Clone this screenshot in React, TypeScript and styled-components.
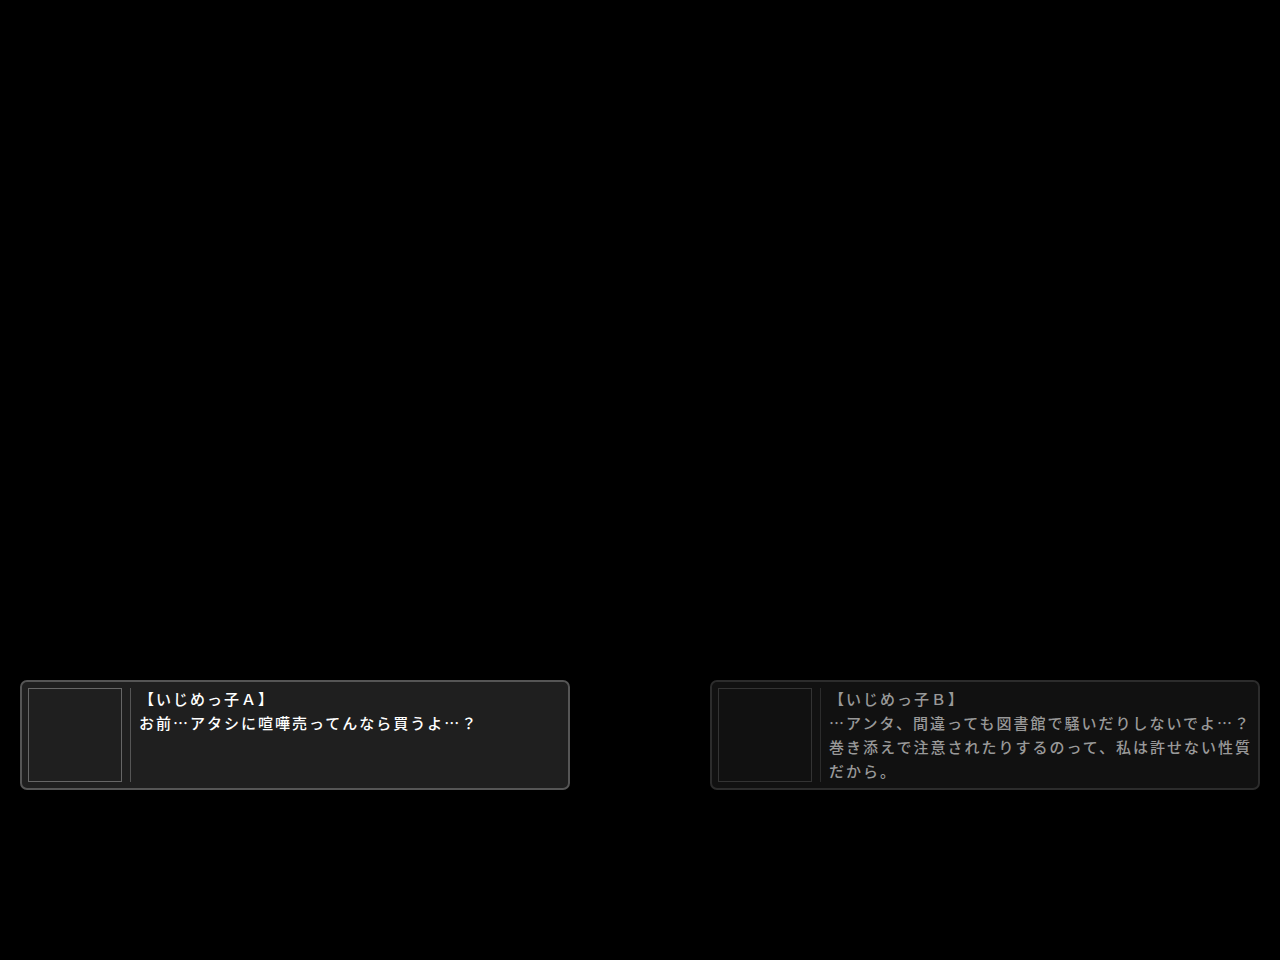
import React from 'react';
import styled, { createGlobalStyle } from 'styled-components';

const GlobalStyle = createGlobalStyle`
  html, body {
    margin: 0;
    padding: 0;
    background: #000;
  }
  body {
    font-family: "Noto Sans CJK JP", "Noto Sans", sans-serif;
  }
`;

const Screen = styled.div`
  width: 1280px;
  height: 960px;
  background: #000;
  display: flex;
  flex-direction: column;
  justify-content: flex-end;
  padding: 0 20px 170px;
  box-sizing: border-box;
`;

const Row = styled.div`
  display: flex;
  justify-content: space-between;
  align-items: flex-start;
`;

const Window = styled.div<{ $active: boolean }>`
  width: 550px;
  height: 110px;
  box-sizing: border-box;
  display: flex;
  gap: 8px;
  padding: 6px;
  border-radius: 7px;
  border: 2px solid ${(p) => (p.$active ? '#555' : '#2c2c2c')};
  background: ${(p) => (p.$active ? '#1f1f1f' : '#111')};
`;

const Portrait = styled.div<{ $active: boolean }>`
  flex: 0 0 94px;
  height: 94px;
  box-sizing: border-box;
  border: 1px solid ${(p) => (p.$active ? '#666' : '#333')};
`;

const Divider = styled.div<{ $active: boolean }>`
  flex: 0 0 1px;
  height: 94px;
  background: ${(p) => (p.$active ? '#555' : '#2c2c2c')};
`;

const Body = styled.div<{ $active: boolean }>`
  flex: 1;
  min-width: 0;
  color: ${(p) => (p.$active ? '#fff' : '#999')};
  font-size: 15px;
  line-height: 24px;
  letter-spacing: 2px;
  font-weight: 500;
  white-space: pre;
  margin-top: -1px;
`;

type Line = { name: string; text: string; active: boolean };

const lines: Line[] = [
  {
    name: '【いじめっ子Ａ】',
    text: 'お前…アタシに喧嘩売ってんなら買うよ…？',
    active: true,
  },
  {
    name: '【いじめっ子Ｂ】',
    text: '…アンタ、間違っても図書館で騒いだりしないでよ…？\n巻き添えで注意されたりするのって、私は許せない性質\nだから。',
    active: false,
  },
];

const MessageWindow: React.FC<{ line: Line }> = ({ line }) => (
  <Window $active={line.active}>
    <Portrait $active={line.active} />
    <Divider $active={line.active} />
    <Body $active={line.active}>
      {line.name}
      {'\n'}
      {line.text}
    </Body>
  </Window>
);

const App: React.FC = () => (
  <>
    <GlobalStyle />
    <Screen>
      <Row>
        {lines.map((l) => (
          <MessageWindow key={l.name} line={l} />
        ))}
      </Row>
    </Screen>
  </>
);

export default App;
